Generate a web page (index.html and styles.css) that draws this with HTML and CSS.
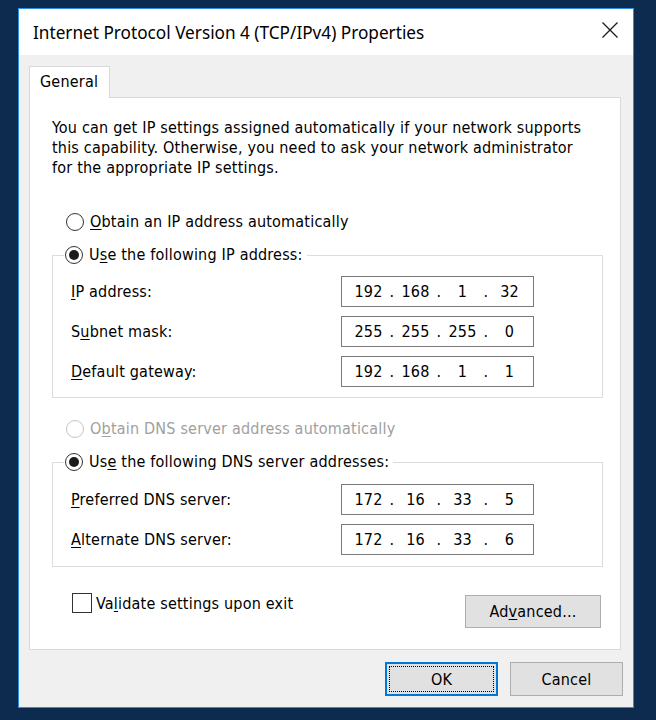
FILE: index.html
```html
<!DOCTYPE html>
<html>
<head>
<meta charset="utf-8">
<link rel="stylesheet" href="styles.css">
</head>
<body>
<div class="window">
  <div class="titlebar">
    <span class="title">Internet Protocol Version 4 (TCP/IPv4) Properties</span>
    <span class="close">
      <svg width="16" height="16" viewBox="0 0 16 16"><path d="M0.5 0.5 L15.5 15.5 M15.5 0.5 L0.5 15.5" stroke="#1a1a1a" stroke-width="1.3" fill="none"/></svg>
    </span>
  </div>
  <div class="client">
    <div class="tabs"><div class="tab">General</div></div>
    <div class="panel">
      <p class="intro">You can get IP settings assigned automatically if your network supports<br>this capability. Otherwise, you need to ask your network administrator<br>for the appropriate IP settings.</p>

      <div class="radio-row first"><span class="radio"></span><span><u>O</u>btain an IP address automatically</span></div>

      <fieldset class="group g1">
        <legend><span class="radio on"></span><span>U<u>s</u>e the following IP address:</span></legend>
        <div class="fields">
          <span class="label"><u>I</u>P address:</span>
          <div class="ip"><span class="seg">192</span><span class="dot">.</span><span class="seg">168</span><span class="dot">.</span><span class="seg">1</span><span class="dot">.</span><span class="seg">32</span></div>
          <span class="label">S<u>u</u>bnet mask:</span>
          <div class="ip"><span class="seg">255</span><span class="dot">.</span><span class="seg">255</span><span class="dot">.</span><span class="seg">255</span><span class="dot">.</span><span class="seg">0</span></div>
          <span class="label"><u>D</u>efault gateway:</span>
          <div class="ip"><span class="seg">192</span><span class="dot">.</span><span class="seg">168</span><span class="dot">.</span><span class="seg">1</span><span class="dot">.</span><span class="seg">1</span></div>
        </div>
      </fieldset>

      <div class="radio-row dns disabled"><span class="radio"></span><span>O<u>b</u>tain DNS server address automatically</span></div>

      <fieldset class="group g2">
        <legend><span class="radio on"></span><span>Us<u>e</u> the following DNS server addresses:</span></legend>
        <div class="fields">
          <span class="label"><u>P</u>referred DNS server:</span>
          <div class="ip"><span class="seg">172</span><span class="dot">.</span><span class="seg">16</span><span class="dot">.</span><span class="seg">33</span><span class="dot">.</span><span class="seg">5</span></div>
          <span class="label"><u>A</u>lternate DNS server:</span>
          <div class="ip"><span class="seg">172</span><span class="dot">.</span><span class="seg">16</span><span class="dot">.</span><span class="seg">33</span><span class="dot">.</span><span class="seg">6</span></div>
        </div>
      </fieldset>

      <div class="bottom-row">
        <div class="check-row"><span class="checkbox"></span><span>Va<u>l</u>idate settings upon exit</span></div>
        <button class="btn adv">Ad<u>v</u>anced...</button>
      </div>
    </div>
    <div class="buttons">
      <button class="btn ok"><span class="focus">OK</span></button>
      <button class="btn cancel">Cancel</button>
    </div>
  </div>
</div>
</body>
</html>
```

FILE: styles.css
```css
html, body {
  margin: 0;
  padding: 0;
  background: #0d2a4f;
  height: 720px;
  overflow: hidden;
}

body {
  font-family: "DejaVu Sans Condensed", "DejaVu Sans", sans-serif;
  font-stretch: condensed;
  font-size: 16px;
  letter-spacing: 0.2px;
  color: #000;
}

.window {
  margin: 8px 0 0 18px;
  width: 614px;
  height: 698px;
  border: 1px solid #2f8de2;
  background: #f0f0f0;
  display: flex;
  flex-direction: column;
}

.titlebar {
  flex: none;
  height: 46px;
  background: #fff;
  display: flex;
  align-items: center;
  justify-content: space-between;
  padding: 0 15px 0 14px;
}

.title {
  font-family: "Noto Sans", "Open Sans", sans-serif;
  font-stretch: normal;
  letter-spacing: 0;
  font-size: 17.2px;
  color: #000;
}

.close {
  display: flex;
  margin-top: -4px;
}

.client {
  flex: 1;
  padding: 11px 12px 0 10px;
  display: flex;
  flex-direction: column;
}

.tabs {
  flex: none;
  display: flex;
  height: 31px;
  position: relative;
  z-index: 1;
}

.tab {
  width: 81px;
  box-sizing: border-box;
  height: 32px;
  background: #fff;
  border: 1px solid #d9d9d9;
  border-bottom: none;
  padding: 5px 0 0 10px;
  line-height: 20px;
}

.panel {
  flex: none;
  box-sizing: border-box;
  height: 553px;
  background: #fff;
  border: 1px solid #d9d9d9;
  padding: 20px 18px 0 22px;
}

.intro {
  margin: 0;
  line-height: 20px;
  white-space: nowrap;
}

u {
  text-decoration: underline;
  text-underline-offset: 2px;
}

.radio-row {
  display: flex;
  align-items: center;
  height: 20px;
  line-height: 20px;
  gap: 6px;
}

.radio-row.first {
  margin: 34px 0 0 14px;
}

.radio-row.dns {
  margin: 21px 0 0 14px;
}

.disabled {
  color: #a0a0a0;
}

.radio {
  width: 18px;
  height: 18px;
  box-sizing: border-box;
  border: 1px solid #333;
  border-radius: 50%;
  background: #fff;
  display: inline-flex;
  align-items: center;
  justify-content: center;
  flex: none;
}

.disabled .radio {
  border-color: #c4c4c4;
}

.radio.on::after {
  content: "";
  width: 10px;
  height: 10px;
  border-radius: 50%;
  background: #1b1b1b;
}

.group {
  margin: 13px 0 0 0;
  width: 551px;
  box-sizing: border-box;
  border: 1px solid #dcdcdc;
  padding: 0 68px 10px 18px;
}

.group.g2 {
  margin-top: 13px;
  padding-bottom: 11px;
}

.group legend {
  display: flex;
  align-items: center;
  gap: 6px;
  margin-left: -7px;
  padding: 0 4px 0 1px;
  height: 20px;
  line-height: 20px;
}

.fields {
  display: grid;
  grid-template-columns: 1fr 193px;
  row-gap: 9px;
  align-items: center;
  padding-top: 11px;
}

.g2 .fields {
  padding-top: 12px;
}

.label {
  line-height: 20px;
}

.ip {
  height: 31px;
  box-sizing: border-box;
  border: 1px solid #7a7a7a;
  display: flex;
  align-items: center;
  padding-left: 8px;
}

.seg {
  width: 37px;
  text-align: center;
}

.dot {
  width: 10px;
  text-align: center;
}

.bottom-row {
  display: flex;
  justify-content: space-between;
  align-items: flex-start;
  margin-top: 28px;
  padding-right: 1px;
}

.check-row {
  display: flex;
  align-items: center;
  gap: 4px;
  margin: -2px 0 0 20px;
  height: 20px;
}

.checkbox {
  width: 20px;
  height: 20px;
  box-sizing: border-box;
  border: 1px solid #333;
  background: #fff;
  flex: none;
}

.btn {
  font-family: inherit;
  font-stretch: condensed;
  letter-spacing: 0.2px;
  font-size: 16px;
  color: #000;
  background: #e1e1e1;
  border: 1px solid #adadad;
  padding: 0;
  margin: 0;
}

.adv {
  width: 136px;
  height: 33px;
}

.buttons {
  display: flex;
  justify-content: flex-end;
  gap: 12px;
  margin: 12px -2px 0 0;
}

.ok, .cancel {
  width: 113px;
  height: 34px;
}

.ok {
  border: 2px solid #0078d7;
  padding: 2px;
  display: flex;
}

.ok .focus {
  flex: 1;
  border: 1px dotted #000;
  display: flex;
  align-items: center;
  justify-content: center;
}
```
